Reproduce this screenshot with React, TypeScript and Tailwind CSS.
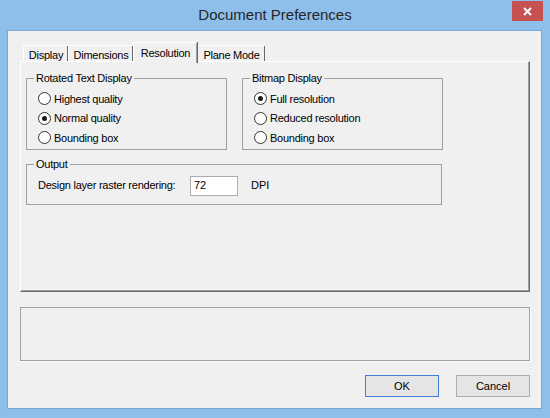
import React from "react";

function Radio({ label, checked }: { label: string; checked?: boolean }) {
  return (
    <div className="flex items-center h-[19.5px]">
      <span className="w-[13px] h-[13px] rounded-full border border-[#333333] bg-white flex items-center justify-center shrink-0">
        {checked && <span className="w-[5px] h-[5px] rounded-full bg-[#1a1a1a]" />}
      </span>
      <span className="ml-[3px] tracking-[-0.25px]">{label}</span>
    </div>
  );
}

function Group({ title, className, children }: { title: string; className?: string; children: React.ReactNode }) {
  return (
    <fieldset className={"border border-[#a0a0a0] " + (className ?? "")}>
      <legend className="ml-[7px] px-[2px] leading-[13px] tracking-[-0.25px]">{title}</legend>
      {children}
    </fieldset>
  );
}

function Tab({ label, active, w }: { label: string; active?: boolean; w: string }) {
  if (active) {
    return (
      <div
        className={
          w +
          " h-[21px] -mb-[2px] relative z-10 bg-[#f0f0f0] border-l border-t border-white rounded-tl-[2px] shadow-[1px_0_0_#696969,inset_-1px_0_0_#a0a0a0] flex items-start justify-center pt-[2px] tracking-[-0.25px]"
        }
      >
        {label}
      </div>
    );
  }
  return (
    <div
      className={
        w +
        " h-[16px] bg-[#f0f0f0] border-l border-t border-white rounded-tl-[2px] shadow-[inset_-1px_0_0_#696969] flex items-start justify-center pt-[1px] tracking-[-0.25px]"
      }
    >
      {label}
    </div>
  );
}

function Button({ label, primary }: { label: string; primary?: boolean }) {
  return (
    <button
      className={
        "w-[74px] h-[22px] bg-[#e5e5e5] border flex items-center justify-center " +
        (primary ? "border-[#3c7fd8]" : "border-[#adadad]")
      }
    >
      {label}
    </button>
  );
}

export default function App() {
  return (
    <div className="w-[550px] h-[418px] bg-[#8ebfeb] flex flex-col font-['Liberation_Sans',Arial,sans-serif] text-[11px] text-black">
      {/* title bar */}
      <div className="h-[30px] relative flex items-center justify-center">
        <span className="text-[15px] text-[#262626] pt-[1px]">Document Preferences</span>
        <div className="absolute right-[7px] top-[1px] w-[31px] h-[20px] bg-[#c75050] flex items-center justify-center">
          <svg width="9" height="9" viewBox="0 0 9 9">
            <path d="M1 1L8 8M8 1L1 8" stroke="white" strokeWidth="2" />
          </svg>
        </div>
      </div>

      {/* client */}
      <div className="ml-[7px] mr-[8px] h-[379px] bg-[#f0f0f0] border border-[#7aa7d5] flex flex-col pl-[12px] pt-[11px]">
        <div className="flex items-end h-[19px] pl-[3px]">
          <Tab label="Display" w="w-[45px]" />
          <Tab label="Dimensions" w="w-[65px]" />
          <Tab label="Resolution" w="w-[64px]" active />
          <Tab label="Plane Mode" w="w-[68px]" />
        </div>

        <div className="w-[510px] h-[231px] border-l border-t border-white border-r border-b border-r-[#696969] border-b-[#696969] shadow-[inset_-1px_-1px_0_#a0a0a0] pl-[5px] pt-[10px] flex flex-col gap-[8px]">
          <div className="flex gap-[15px]">
            <Group title="Rotated Text Display" className="w-[201px] pt-[4px] pb-[1px]">
              <div className="pl-[11px]">
                <Radio label="Highest quality" />
                <Radio label="Normal quality" checked />
                <Radio label="Bounding box" />
              </div>
            </Group>
            <Group title="Bitmap Display" className="w-[201px] pt-[4px] pb-[1px]">
              <div className="pl-[11px]">
                <Radio label="Full resolution" checked />
                <Radio label="Reduced resolution" />
                <Radio label="Bounding box" />
              </div>
            </Group>
          </div>
          <Group title="Output" className="w-[416px] pt-[5px] pb-[8px]">
            <div className="flex items-center pl-[11px]">
              <span className="w-[152px] tracking-[-0.25px]">Design layer raster rendering:</span>
              <div className="w-[48px] h-[20px] bg-white border border-[#abadb3] flex items-center pl-[3px]">72</div>
              <span className="ml-[13px]">DPI</span>
            </div>
          </Group>
        </div>

        <div className="w-[510px] h-[54px] mt-[15px] border border-[#a0a0a0] shadow-[1px_1px_0_#ffffff]" />

        <div className="w-[510px] flex justify-end gap-[17px] mt-[14px]">
          <Button label="OK" primary />
          <Button label="Cancel" />
        </div>
      </div>
    </div>
  );
}
